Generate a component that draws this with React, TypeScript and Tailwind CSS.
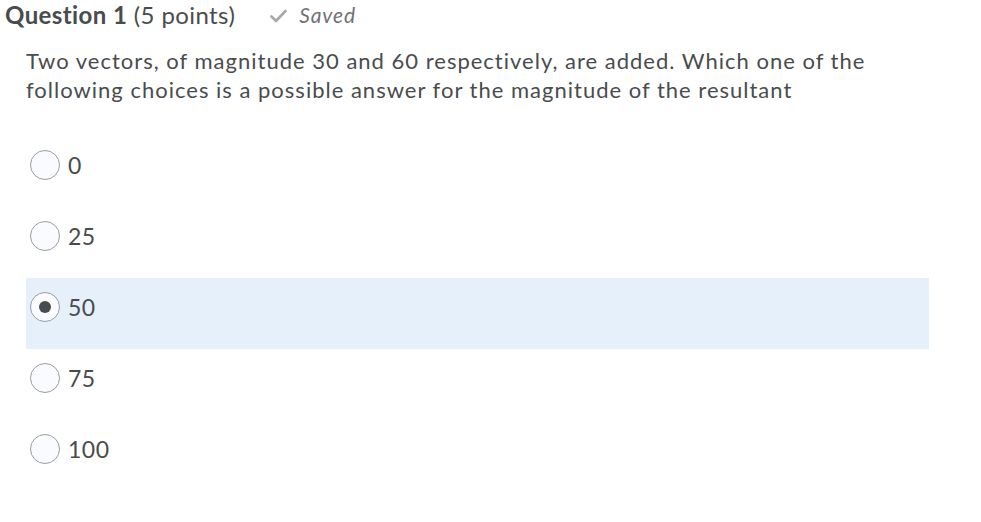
import React from 'react';

const choices = ['0', '25', '50', '75', '100'];
const selected = '50';

const Radio = ({ checked }: { checked: boolean }) => (
  <span className="flex h-[30px] w-[30px] shrink-0 items-center justify-center rounded-full border border-[#9a9da0] bg-[#f9fbff]">
    {checked && <span className="h-[12px] w-[12px] rounded-full bg-[#494c4e]" />}
  </span>
);

const App = () => {
  return (
    <div className="h-[522px] w-[981px] bg-white font-['Lato','Liberation_Sans',sans-serif] text-[#494c4e]">
      <div className="flex items-center pl-[5px] h-[30px]">
        <h2 className="text-[24px] leading-[30px] tracking-[0.4px]">
          <span className="font-bold">Question 1</span> (5 points)
        </h2>
        <span className="ml-[35px] flex items-center gap-[12px] text-[21px] italic tracking-[0.9px] text-[#6e7376]">
          <svg width="17" height="14" viewBox="0 0 17 14" className="mt-[1px]">
            <path d="M1.5 7.5 L6 12 L15.5 2" fill="none" stroke="#a4a8ab" strokeWidth="2.6" strokeLinecap="round" strokeLinejoin="round" />
          </svg>
          Saved
        </span>
      </div>
      <p className="ml-[26px] mt-[16px] w-[900px] text-[22px] leading-[29px] tracking-[1px]">
        Two vectors, of magnitude 30 and 60 respectively, are added. Which one of the following choices is a possible answer for the magnitude of the resultant
      </p>
      <div className="mt-[32px] w-[903px] ml-[26px]">
        {choices.map((c) => (
          <div
            key={c}
            className={`flex h-[71px] items-start gap-[8px] pl-[4px] pt-[14px] ${c === selected ? 'bg-[#e6f0fb]' : ''}`}
          >
            <Radio checked={c === selected} />
            <span className="text-[23px] leading-[30px] tracking-[0.5px]">{c}</span>
          </div>
        ))}
      </div>
    </div>
  );
};

export default App;
